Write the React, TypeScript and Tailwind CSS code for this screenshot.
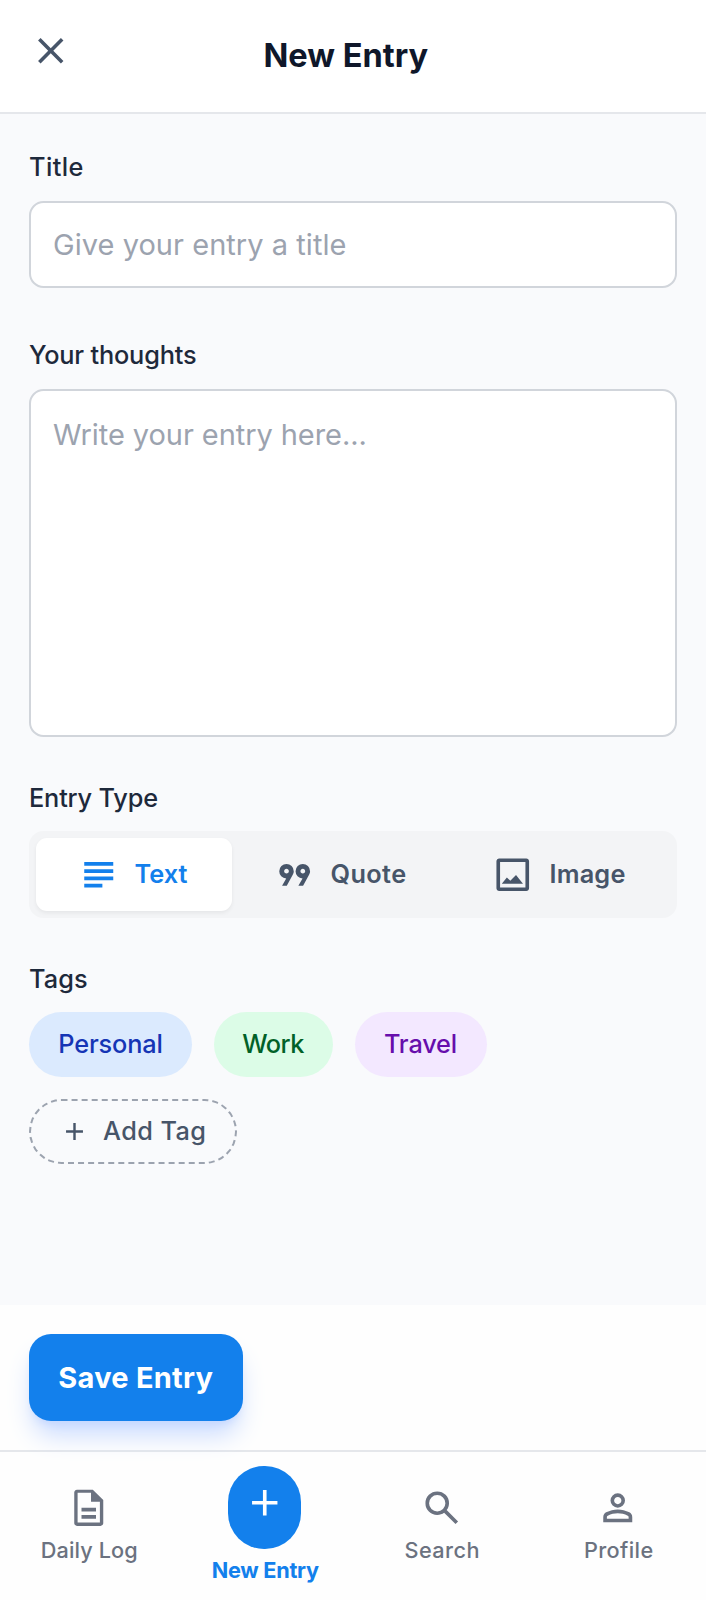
import type { ReactNode } from "react";

const paths = {
  close: "m256-200-56-56 224-224-224-224 56-56 224 224 224-224 56 56-224 224 224 224-56 56-224-224-224 224Z",
  add: "M440-440H200v-80h240v-240h80v240h240v80H520v240h-80v-240Z",
  subject: "M160-200v-80h400v80H160Zm0-160v-80h640v80H160Zm0-160v-80h640v80H160Zm0-160v-80h640v80H160Z",
  quote:
    "m222-240 92-160q-66 0-110-47t-44-113q0-66 47-113t113-47q66 0 113 47t47 113q0 23-5.5 42.5T458-480L326-240H222Zm360 0 92-160q-66 0-110-47t-44-113q0-66 47-113t113-47q66 0 113 47t47 113q0 23-5.5 42.5T818-480L686-240H582ZM320-508q22 0 37-15t15-37q0-22-15-37t-37-15q-22 0-37 15t-15 37q0 22 15 37t37 15Zm360 0q22 0 37-15t15-37q0-22-15-37t-37-15q-22 0-37 15t-15 37q0 22 15 37t37 15Z",
  image:
    "M180-120q-24 0-42-18t-18-42v-600q0-24 18-42t42-18h600q24 0 42 18t18 42v600q0 24-18 42t-42 18H180Zm20-80h560v-560H200v560Zm38-83 112-136 76 74 126-130 154 192H238Z",
  description:
    "M320-240h320v-80H320v80Zm0-160h320v-80H320v80ZM220-80q-24 0-42-18t-18-42v-680q0-24 18-42t42-18h350l230 230v510q0 24-18 42t-42 18H220Zm310-530v-200H234v656h492v-456H530Z",
  search:
    "M784-120 532-372q-30 24-69 38t-83 14q-109 0-184.5-75.5T120-580q0-109 75.5-184.5T380-840q109 0 184.5 75.5T640-580q0 44-14 83t-38 69l252 252-56 56ZM380-400q75 0 127.5-52.5T560-580q0-75-52.5-127.5T380-760q-75 0-127.5 52.5T200-580q0 75 52.5 127.5T380-400Z",
  person:
    "M480-480q-66 0-113-47t-47-113q0-66 47-113t113-47q66 0 113 47t47 113q0 66-47 113t-113 47ZM160-160v-112q0-34 17.5-62.5T224-378q62-31 126-46.5T480-440q66 0 130 15.5T736-378q29 15 46.5 43.5T800-272v112H160Zm80-80h480v-32q0-11-5.5-20T700-306q-54-27-109-40.5T480-360q-56 0-111 13.5T260-306q-9 5-14.5 14t-5.5 20v32Zm240-320q33 0 56.5-23.5T560-640q0-33-23.5-56.5T480-720q-33 0-56.5 23.5T400-640q0 33 23.5 56.5T480-560Z",
};

function Icon({ name, className = "size-[43.5px]" }: { name: keyof typeof paths; className?: string }) {
  return (
    <svg viewBox="0 -960 960 960" fill="currentColor" fillRule="evenodd" className={`shrink-0 ${className}`}>
      <path d={paths[name]} />
    </svg>
  );
}

function Label({ children, className = "" }: { children: ReactNode; className?: string }) {
  return <div className={`text-[25.3px] leading-[36px] font-medium text-[#1e293b] ${className}`}>{children}</div>;
}

function NavItem({ icon, label, className }: { icon: keyof typeof paths; label: string; className: string }) {
  return (
    <a className="flex flex-1 flex-col items-center pt-[33.5px] text-[#6b7280]">
      <Icon name={icon} />
      <span className={`mt-[6.5px] ml-[2px] text-[21.7px] leading-[29px] font-medium ${className}`}>{label}</span>
    </a>
  );
}

export default function App() {
  return (
    <div className="flex h-[1600px] w-[706px] flex-col overflow-hidden bg-[#f9fafc] font-['Inter',sans-serif]">
      <header className="flex h-[114px] shrink-0 items-start border-b-2 border-[#e5e7eb] bg-white px-[29px]">
        <button className="mt-[29px] text-[#475569]">
          <Icon name="close" />
        </button>
        <h1 className="mt-[33px] flex-1 pr-[58px] text-center text-[32.6px] leading-[45px] font-bold text-[#0f172a]">New Entry</h1>
      </header>

      <main className="flex flex-1 flex-col px-[29px] pt-[35px]">
        <Label className="tracking-[0.4px]">Title</Label>
        <input
          placeholder="Give your entry a title"
          className="mt-[16px] h-[87px] rounded-[14.5px] border-2 border-[#d1d5db] bg-white px-[22px] text-[29px] tracking-[0.04px] placeholder:text-[#9ca3af]"
        />
        <Label className="mt-[49px] tracking-[-0.18px]">Your thoughts</Label>
        <textarea
          placeholder="Write your entry here..."
          className="mt-[16px] h-[347.5px] resize-none rounded-[14.5px] border-2 border-[#d1d5db] bg-white px-[22px] py-[22px] text-[29px] leading-[43.5px] tracking-[-0.07px] placeholder:text-[#9ca3af]"
        />
        <Label className="mt-[43.5px] tracking-[-0.17px]">Entry Type</Label>
        <div className="mt-[15px] flex h-[86.7px] rounded-[14.5px] bg-[#f3f4f6] p-[7px] text-[25.3px] font-semibold text-[#475569]">
          <button className="flex w-[196px] items-center justify-center gap-[14.5px] rounded-[11px] bg-white pr-[4px] text-[#1380ec] shadow-[0_2px_4px_rgba(0,0,0,0.06)]">
            <Icon name="subject" />
            Text
          </button>
          <button className="flex w-[219px] items-center justify-center gap-[14.5px] pr-[4px] tracking-[0.4px]">
            <Icon name="quote" />
            Quote
          </button>
          <button className="flex flex-1 items-center justify-center gap-[14.5px] pr-[4px] tracking-[0.2px]">
            <Icon name="image" />
            Image
          </button>
        </div>
        <Label className="mt-[43px] tracking-[0.1px]">Tags</Label>
        <div className="mt-[15px] flex flex-wrap gap-[22px] text-[25.3px] font-medium">
          <span className="flex h-[65px] w-[163px] items-center justify-center rounded-full bg-[#dbeafe] tracking-[-0.15px] text-[#1535b5]">Personal</span>
          <span className="flex h-[65px] w-[119px] items-center justify-center rounded-full bg-[#dcfce7] pr-px tracking-[-0.5px] text-[#016128]">Work</span>
          <span className="flex h-[65px] w-[132px] items-center justify-center rounded-full bg-[#f3e8ff] pr-px tracking-[-0.15px] text-[#670eac]">Travel</span>
          <div className="w-full">
            <button className="flex h-[65px] w-[208px] items-center justify-center gap-[14.5px] rounded-full border-2 border-dashed border-[#9ca3af] tracking-[0.4px] text-[#475569]">
              <Icon name="add" className="size-[29px]" />
              Add Tag
            </button>
          </div>
        </div>
      </main>

      <footer className="shrink-0 bg-[#fefefe]">
        <div className="h-[145px] px-[29px] pt-[29px]">
          <button className="h-[87px] w-[213.5px] rounded-[22px] bg-[#1380ec] text-[29px] font-bold tracking-[0.25px] text-white shadow-[0_18px_27px_-5px_#c7d9ff,0_7px_11px_-7px_#9dbdff]">
            Save Entry
          </button>
        </div>

        <nav className="flex h-[150px] border-t-2 border-[#e5e7eb]">
          <NavItem icon="description" label="Daily Log" className="tracking-[0.1px]" />
          <a className="flex flex-1 flex-col items-center pt-[14px] text-[#1380ec]">
            <span className="mr-px flex h-[83px] w-[72.5px] justify-center rounded-[36px] bg-[#1380ec] pt-[14.5px] pl-px text-white">
              <Icon name="add" />
            </span>
            <span className="mt-[7px] ml-px text-[21.7px] leading-[29px] font-bold tracking-[-0.3px]">New Entry</span>
          </a>
          <NavItem icon="search" label="Search" className="tracking-[0.45px]" />
          <NavItem icon="person" label="Profile" className="tracking-[0.4px]" />
        </nav>
      </footer>
    </div>
  );
}
